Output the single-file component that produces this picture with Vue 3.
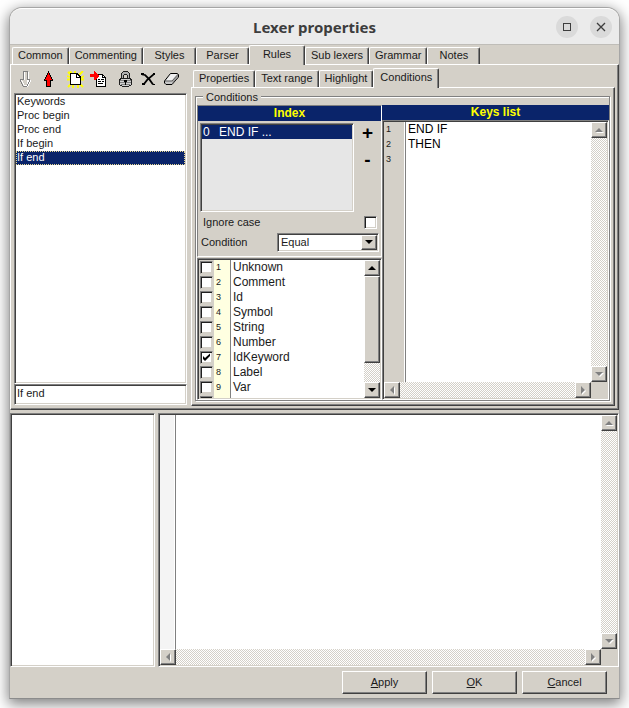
<script setup>
import { ref } from 'vue'

const tabs = ['Common', 'Commenting', 'Styles', 'Parser', 'Rules', 'Sub lexers', 'Grammar', 'Notes']
const activeTab = ref('Rules')
const pages = ['Properties', 'Text range', 'Highlight', 'Conditions']
const activePage = ref('Conditions')

const rules = ['Keywords', 'Proc begin', 'Proc end', 'If begin', 'If end']
const selectedRule = ref('If end')
const ruleName = ref('If end')

const ignoreCase = ref(false)
const condition = ref('Equal')
const keys = ref('END IF\nTHEN\n')
const sample = ref('')

const tokens = ref([
  { name: 'Unknown', on: false },
  { name: 'Comment', on: false },
  { name: 'Id', on: false },
  { name: 'Symbol', on: false },
  { name: 'String', on: false },
  { name: 'Number', on: false },
  { name: 'IdKeyword', on: true },
  { name: 'Label', on: false },
  { name: 'Var', on: false },
  { name: '', on: false }
])
</script>

<template>
  <div class="desk">
    <div class="window">
      <header class="titlebar">
        <h1>Lexer properties</h1>
        <div class="controls">
          <button type="button" class="round" aria-label="Maximize">
            <svg width="22" height="22" viewBox="0 0 22 22"><rect x="7.5" y="7.5" width="7" height="7" fill="none" stroke="#3d3d3d" /></svg>
          </button>
          <button type="button" class="round" aria-label="Close">
            <svg width="22" height="22" viewBox="0 0 22 22"><path d="M7 7l8 8M15 7l-8 8" stroke="#3d3d3d" stroke-width="1.3" /></svg>
          </button>
        </div>
      </header>

      <nav class="tabs">
        <button v-for="t in tabs" :key="t" type="button" class="tab" :class="{ active: t === activeTab }" @click="activeTab = t">{{ t }}</button>
      </nav>

      <main class="panel upper">
        <section class="side">
          <div class="toolbar">
            <button type="button" aria-label="Move down">
              <svg width="13" height="17" viewBox="0 0 13 17" shape-rendering="crispEdges">
                <path d="M5 1h4v8h3v2h-1v2h-1v2h-1v1h-2v-1h-1v-2h-1v-2h-1v-2h1z" fill="#fff" />
                <path d="M4 0h5v1h-5zM4 1h1v7h-1zM8 1h1v7h-1zM1 8h4v1h-4zM8 8h3v1h-3zM1 9h1v2h-1zM2 11h1v2h-1zM3 13h1v2h-1zM4 15h1v1h-1zM10 9h1v2h-1zM9 11h1v2h-1zM8 13h1v2h-1zM5 15h3v1h-3z" fill="#808080" />
                <path d="M5 1h3v8h-3zM2 9h3v2h-3zM5 9h3v5h-3z" fill="#d4d0c8" />
                <path d="M5 1h1v8h-1zM2 9h1v1h-1zM3 10h1v2h-1zM4 12h1v2h-1zM5 14h1v1h-1zM11 9h1v2h-1zM10 11h1v2h-1zM9 13h1v2h-1zM8 15h1v1h-1zM9 1h1v7h-1z" fill="#fff" />
              </svg>
            </button>
            <button type="button" aria-label="Move up">
              <svg width="11" height="17" viewBox="0 0 11 17" shape-rendering="crispEdges">
                <path d="M5 0h1v2h1v2h1v2h1v2h1v2h-2v6h-5v-6h-2v-2h1v-2h1v-2h1v-2h1z" fill="#000" />
                <path d="M5 2h1v2h1v2h1v2h1v1h-2v6h-3v-6h-2v-1h1v-2h1v-2h1z" fill="#f00" />
              </svg>
            </button>
            <span class="sep"></span>
            <button type="button" aria-label="New">
              <svg width="17" height="17" viewBox="0 0 17 17">
                <path d="M1 1l4 4M8 0v4M16 0l-4 4M0 8.500h3M17 8.500h-4M1 16l4-4M16 16l-4-4M6 17v-3M11 17v-3M3 0l2 3M17 5l-3 2M0 5l3 1" stroke="#ff0" stroke-width="1.8" />
                <path d="M3 2h8v1h1v1h1v1h1v9H3z" fill="#000" shape-rendering="crispEdges" />
                <path d="M4 3h5v4h4v6H4zM10 4h1v1h1v1h-2z" fill="#fff" shape-rendering="crispEdges" />
              </svg>
            </button>
            <button type="button" aria-label="Import">
              <svg width="17" height="16" viewBox="0 0 17 16" shape-rendering="crispEdges">
                <path d="M6 3h7v1h1v1h1v1h1v10h-10z" fill="#000" />
                <path d="M7 4h5v3h3v8h-8z" fill="#fff" />
                <path d="M13 5h1v1h-1z" fill="#fff" />
                <path d="M8 8h2v1h-2zM11 8h3v1h-3zM8 10h3v1h-3zM12 10h2v1h-2zM8 12h5v1h-5z" fill="#000" />
                <path d="M0 3h4v-3h1v1h1v1h1v1h1v1h1v2h-1v1h-1v1h-1v1h-2v-3h-4z" fill="#f00" />
              </svg>
            </button>
            <span class="sep"></span>
            <button type="button" aria-label="Lock">
              <svg width="13" height="17" viewBox="0 0 13 17" shape-rendering="crispEdges">
                <path d="M4 0h5v1h1v1h1v5h1v1h1v6h-1v1h-2v1H3v-1H1v-1H0V8h1V7h1V2h1V1h1z" fill="#202020" />
                <path d="M4 1h5v1h1v5H9V4H8V3H5v1H4v3H3V2h1z" fill="#b0b0b0" />
                <path d="M5 4h3v3H5z" fill="#d4d0c8" />
                <path d="M2 8h9v1h1v5h-2v1H3v-1H1V9h1z" fill="#d0d0d0" />
                <path d="M1 9h11v1H1zM1 11h11v1H1zM2 13h9v1H2z" fill="#808080" />
                <path d="M5 9h3v2H7v3H6v-3H5z" fill="#000" />
              </svg>
            </button>
            <button type="button" aria-label="Delete">
              <svg width="15" height="13" viewBox="0 0 15 13">
                <path d="M1 1.500l3 .5c3 2.500 5.500 5.500 8 9.500M12.500 1.500c-3.500 2.500-7 5.500-9.500 9.500" fill="none" stroke="#000" stroke-width="1.700" />
                <path d="M0 0h3v2h-3zM12 0h2v2h-2zM1 10h3v2h-3zM12 11h2v1h-2z" fill="#000" />
              </svg>
            </button>
            <button type="button" aria-label="Clear">
              <svg width="15" height="12" viewBox="0 0 15 12">
                <path d="M.500 8l6-7.500h6.500l1.500 1V4L8 11.500H2L.500 10z" fill="#c8c8c8" stroke="#000" />
                <path d="M2 7.500L7 1h6L8 7.500z" fill="#f0f0f0" />
                <path d="M1 8h7l6-6.500" fill="none" stroke="#404040" stroke-width=".8" />
                <path d="M8.500 8.500L14 2.500V4l-5.500 6.500z" fill="#909090" />
              </svg>
            </button>
          </div>

          <ul class="sunken rules" role="listbox" aria-label="Rules">
            <li v-for="r in rules" :key="r" role="option" :aria-selected="r === selectedRule" :class="{ selected: r === selectedRule }" @click="selectedRule = ruleName = r">{{ r }}</li>
          </ul>
          <input v-model="ruleName" class="sunken name" type="text" aria-label="Rule name" />
        </section>

        <section class="detail">
          <nav class="tabs inner">
            <button v-for="p in pages" :key="p" type="button" class="tab" :class="{ active: p === activePage }" @click="activePage = p">{{ p }}</button>
          </nav>
          <div class="panel page">
            <div class="group" role="group" aria-labelledby="group-title">
              <span id="group-title" class="legend">Conditions</span>

              <div class="column">
                <div class="index">
                  <h2>Index</h2>
                  <div class="indexrow">
                    <ul class="sunken entries" role="listbox" aria-label="Index">
                      <li role="option" aria-selected="true"><span class="num">0</span>END IF ...</li>
                    </ul>
                    <div class="plusminus">
                      <button type="button">+</button>
                      <button type="button">-</button>
                    </div>
                  </div>
                  <div class="field check">
                    <label for="ignore">Ignore case</label>
                    <input id="ignore" v-model="ignoreCase" class="box" type="checkbox" />
                  </div>
                  <div class="field">
                    <label for="condition">Condition</label>
                    <div class="sunken combo">
                      <select id="condition" v-model="condition">
                        <option>Equal</option>
                        <option>Not equal</option>
                      </select>
                      <span class="drop raised"><i class="arrow down"></i></span>
                    </div>
                  </div>
                </div>

                <div class="sunken checklist">
                  <div class="rows">
                    <label v-for="(t, i) in tokens" :key="i" class="token">
                      <span class="cell"><input v-model="t.on" class="box" type="checkbox" /></span>
                      <span class="no"><template v-if="t.name">{{ i + 1 }}</template></span>
                      <span class="text">{{ t.name }}</span>
                    </label>
                  </div>
                  <div class="vbar">
                    <button type="button" class="raised" aria-label="Scroll up"><i class="arrow up"></i></button>
                    <div class="raised thumb"></div>
                    <div class="rest"></div>
                    <button type="button" class="raised" aria-label="Scroll down"><i class="arrow down"></i></button>
                  </div>
                </div>
              </div>

              <div class="column">
                <h2>Keys list</h2>
                <div class="sunken editor">
                  <div class="gutter lines"><span v-for="n in 3" :key="n">{{ n }}</span></div>
                  <textarea v-model="keys" aria-label="Keys list" spellcheck="false"></textarea>
                  <div class="vbar">
                    <button type="button" class="raised" aria-label="Scroll up"><i class="arrow up off"></i></button>
                    <button type="button" class="raised" aria-label="Scroll down"><i class="arrow down off"></i></button>
                  </div>
                  <div class="hbar">
                    <button type="button" class="raised" aria-label="Scroll left"><i class="arrow back off"></i></button>
                    <button type="button" class="raised" aria-label="Scroll right"><i class="arrow forth off"></i></button>
                  </div>
                </div>
              </div>
            </div>
          </div>
        </section>
      </main>

      <section class="lower">
        <div class="sunken tree"></div>
        <div class="sunken editor memo">
          <div class="gutter"></div>
          <textarea v-model="sample" aria-label="Sample text" spellcheck="false"></textarea>
          <div class="vbar">
            <button type="button" class="raised" aria-label="Scroll up"><i class="arrow up off"></i></button>
            <button type="button" class="raised" aria-label="Scroll down"><i class="arrow down off"></i></button>
          </div>
          <div class="hbar">
            <button type="button" class="raised" aria-label="Scroll left"><i class="arrow back off"></i></button>
            <button type="button" class="raised" aria-label="Scroll right"><i class="arrow forth off"></i></button>
          </div>
        </div>
      </section>

      <footer class="actions">
        <button type="button" class="raised"><u>A</u>pply</button>
        <button type="button" class="raised"><u>O</u>K</button>
        <button type="button" class="raised"><u>C</u>ancel</button>
      </footer>
    </div>
  </div>
</template>

<style>
html,
body {
  background: #fff;
}
</style>

<style scoped>
* {
  box-sizing: border-box;
}

.desk {
  height: 100vh;
  min-height: 480px;
  padding: 7px 9px 9px;
  overflow: hidden;
  font: 11px/14px "Liberation Sans", Arial, sans-serif;
  color: #1a1a1a;
}

.window {
  display: grid;
  grid-template-rows: 37px 19px minmax(0, 346fr) minmax(0, 257fr) 31px;
  height: 100%;
  background: #d4d0c8;
  border: 1px solid #a6a6a6;
  border-bottom-color: #8c8c8c;
  border-radius: 13px 13px 0 0;
  box-shadow: 0 4px 14px 1px rgba(0, 0, 0, 0.5);
}

button {
  padding: 0;
  font: inherit;
  color: inherit;
  background: none;
  border: 0;
}

ul {
  margin: 0;
  padding: 0;
  list-style: none;
}

/* title bar */
.titlebar {
  display: grid;
  grid-template-columns: 1fr auto 1fr;
  align-items: center;
  padding: 0 7px;
  background: #ebebeb;
  border-top: 1px solid #fff;
  border-bottom: 1px solid #bfbdb8;
  border-radius: 12px 12px 0 0;
}

.titlebar h1 {
  grid-column: 2;
  margin: 0;
  font: 700 15px/20px "Noto Sans", sans-serif;
  color: #3d3d3d;
}

.controls {
  display: flex;
  justify-content: flex-end;
  gap: 12px;
}

.round {
  width: 22px;
  height: 22px;
  background: #dadada;
  border-radius: 50%;
}

.round svg {
  display: block;
}

/* tabs */
.tabs {
  display: flex;
  align-items: flex-end;
  padding-left: 2px;
}

.tab {
  min-width: 53px;
  height: 17px;
  padding: 0 5px 2px;
  background: #d4d0c8;
  border: 1px solid #fff;
  border-right-color: #404040;
  border-bottom: 0;
  border-radius: 2px 2px 0 0;
  box-shadow: inset -1px 0 #808080;
  white-space: nowrap;
}

.tab.active {
  z-index: 1;
  height: 20px;
  margin-bottom: -1px;
  min-width: 56px;
  padding: 0 6px 4px;
}

.tabs.inner {
  height: 22px;
}

.panel {
  border: 1px solid #fff;
  border-right-color: #404040;
  border-bottom-color: #404040;
  box-shadow: inset -1px -1px #808080;
}

/* bevels */
.sunken {
  padding: 1px;
  background: #fff;
  border: 1px solid;
  border-color: #808080 #fff #fff #808080;
  box-shadow: inset 1px 1px #404040, inset -1px -1px #d4d0c8;
}

.raised {
  background: #d4d0c8;
  border: 1px solid;
  border-color: #fff #404040 #404040 #fff;
  box-shadow: inset -1px -1px #808080;
}

/* upper half */
.upper {
  display: grid;
  grid-template-columns: 180px minmax(0, 1fr);
  padding: 0 3px 3px 0;
}

.side {
  display: flex;
  flex-direction: column;
  min-height: 0;
  padding: 0 4px 1px 3px;
}

.toolbar {
  display: flex;
  align-items: center;
  height: 28px;
}

.toolbar button {
  display: grid;
  place-items: center;
  width: 23px;
  height: 23px;
}

.sep {
  width: 4px;
}

.rules {
  flex: 1;
  min-height: 0;
  overflow: hidden;
}

.rules li {
  height: 14px;
  padding-left: 1px;
  line-height: 13px;
}

.rules .selected {
  color: #fff;
  background: #0a246a;
  outline: 1px dotted #e8d890;
  outline-offset: -1px;
}

.name {
  height: 21px;
  padding: 0 2px 3px;
  font: inherit;
  color: inherit;
  outline: 0;
}

.detail {
  display: flex;
  flex-direction: column;
  min-height: 0;
}

.page {
  display: flex;
  flex: 1;
  min-height: 0;
  padding: 8px 4px 4px 3px;
}

.group {
  position: relative;
  display: grid;
  flex: 1;
  grid-template-columns: 185px minmax(0, 1fr);
  min-height: 0;
  padding: 8px 0 0 1px;
  border: 1px solid #808080;
  box-shadow: 1px 1px #fff, inset 1px 1px #fff;
}

.legend {
  position: absolute;
  top: -7px;
  left: 7px;
  padding: 0 3px;
  background: #d4d0c8;
}

.column {
  display: flex;
  flex-direction: column;
  min-height: 0;
}

h2 {
  height: 15px;
  margin: 0;
  font: 700 12px/15px "Liberation Sans", Arial, sans-serif;
  color: #ff0;
  text-align: center;
  background: #0a246a;
}

.index {
  padding-bottom: 4px;
  border: 1px solid;
  border-color: #808080 #fff #fff #808080;
}

.indexrow {
  display: flex;
  padding: 2px 0 0 2px;
}

.entries {
  width: 154px;
  height: 89px;
  background: #e6e6e6;
}

.entries li {
  display: flex;
  height: 14px;
  padding-left: 1px;
  font-size: 12px;
  color: #fff;
  background: #0a246a;
}

.num {
  width: 16px;
}

.plusminus {
  display: flex;
  flex: 1;
  flex-direction: column;
  gap: 7px;
}

.plusminus button {
  height: 20px;
  font: 700 19px/16px "Liberation Sans", Arial, sans-serif;
  color: #000;
}

.field {
  display: flex;
  align-items: center;
  justify-content: space-between;
  height: 20px;
  padding: 0 2px 0 3px;
}

.field.check {
  padding: 0 4px 0 5px;
}

.box {
  display: block;
  width: 13px;
  height: 13px;
  margin: 0;
  appearance: none;
  background: #fff;
  border: 1px solid;
  border-color: #808080 #fff #fff #808080;
  box-shadow: inset 1px 1px #202020, inset -1px -1px #d4d0c8;
}

.combo {
  display: flex;
  width: 102px;
  height: 19px;
}

.combo select {
  flex: 1;
  min-width: 0;
  padding: 0 2px;
  font: inherit;
  color: inherit;
  appearance: none;
  background: #fff;
  border: 0;
  outline: 0;
}

.drop {
  display: grid;
  place-items: center;
  width: 16px;
  pointer-events: none;
}

.checklist {
  display: flex;
  flex: 1;
  min-height: 0;
  margin-top: 1px;
}

.rows {
  flex: 1;
  overflow: hidden;
}

.token {
  display: flex;
  height: 15px;
}

.cell {
  width: 15px;
  padding: 1px;
  background: #d4d0c8;
}

.token .box {
  border-color: #808080 #d4d0c8 #d4d0c8 #808080;
}

.token .box:checked {
  background: #fff url("data:image/svg+xml,%3Csvg xmlns='http://www.w3.org/2000/svg' viewBox='0 0 11 11'%3E%3Cpath d='M2 4v3l2 2 5-5V1.500L4 6z'/%3E%3C/svg%3E") center / 11px 11px no-repeat;
}

.no {
  width: 17px;
  padding-left: 2px;
  font-size: 9px;
  line-height: 15px;
  background: #ffffe1;
  border-right: 1px solid #808080;
}

.text {
  padding-left: 2px;
  font-size: 12px;
}

/* scroll bars */
.vbar,
.hbar {
  display: flex;
  justify-content: space-between;
  background: repeating-conic-gradient(#d4d0c8 0 25%, #fff 0 50%) 0 0 / 2px 2px;
}

.vbar {
  flex-direction: column;
  width: 16px;
}

.vbar button,
.hbar button {
  display: grid;
  flex: none;
  place-items: center;
  width: 16px;
  height: 16px;
}

.thumb {
  flex: 87;
}

.rest {
  flex: 19;
}

.arrow {
  display: block;
  width: 8px;
  height: 4px;
}

.arrow::before {
  display: block;
  width: 100%;
  height: 100%;
  content: "";
  background: #000;
}

.up::before {
  clip-path: polygon(50% 0, 100% 100%, 0 100%);
}

.down::before {
  clip-path: polygon(0 0, 100% 0, 50% 100%);
}

.back,
.forth {
  width: 4px;
  height: 8px;
}

.back::before {
  clip-path: polygon(100% 0, 100% 100%, 0 50%);
}

.forth::before {
  clip-path: polygon(0 0, 100% 50%, 0 100%);
}

.off {
  filter: drop-shadow(1px 1px 0 #fff);
}

.off::before {
  background: #808080;
}

/* editors */
.editor {
  display: grid;
  flex: 1;
  grid-template-columns: 22px minmax(0, 1fr) 16px;
  grid-template-rows: minmax(0, 1fr) 16px;
  min-height: 0;
  background: #d4d0c8;
}

.editor .hbar {
  grid-column: 1 / 3;
}

.editor .gutter {
  background: #d4d0c8;
  border-right: 1px solid #808080;
  box-shadow: inset -1px 0 #fff;
}

.lines {
  display: flex;
  flex-direction: column;
  padding-left: 2px;
  font-size: 9px;
  line-height: 15px;
}

textarea {
  padding: 0 2px;
  overflow: hidden;
  font: 12px/15px "Liberation Sans", Arial, sans-serif;
  color: #000;
  background: #fff;
  border: 0;
  outline: 0;
  resize: none;
}

/* lower half */
.lower {
  display: flex;
  gap: 3px;
  padding-top: 3px;
}

.tree {
  width: 145px;
}

.editor.memo {
  grid-template-columns: 16px minmax(0, 1fr) 16px;
}

.memo .gutter {
  background: #f4f4f4;
}

.actions {
  display: flex;
  justify-content: flex-end;
  gap: 5px;
  padding: 4px 12px;
}

.actions button {
  width: 85px;
  padding-bottom: 2px;
}
</style>
